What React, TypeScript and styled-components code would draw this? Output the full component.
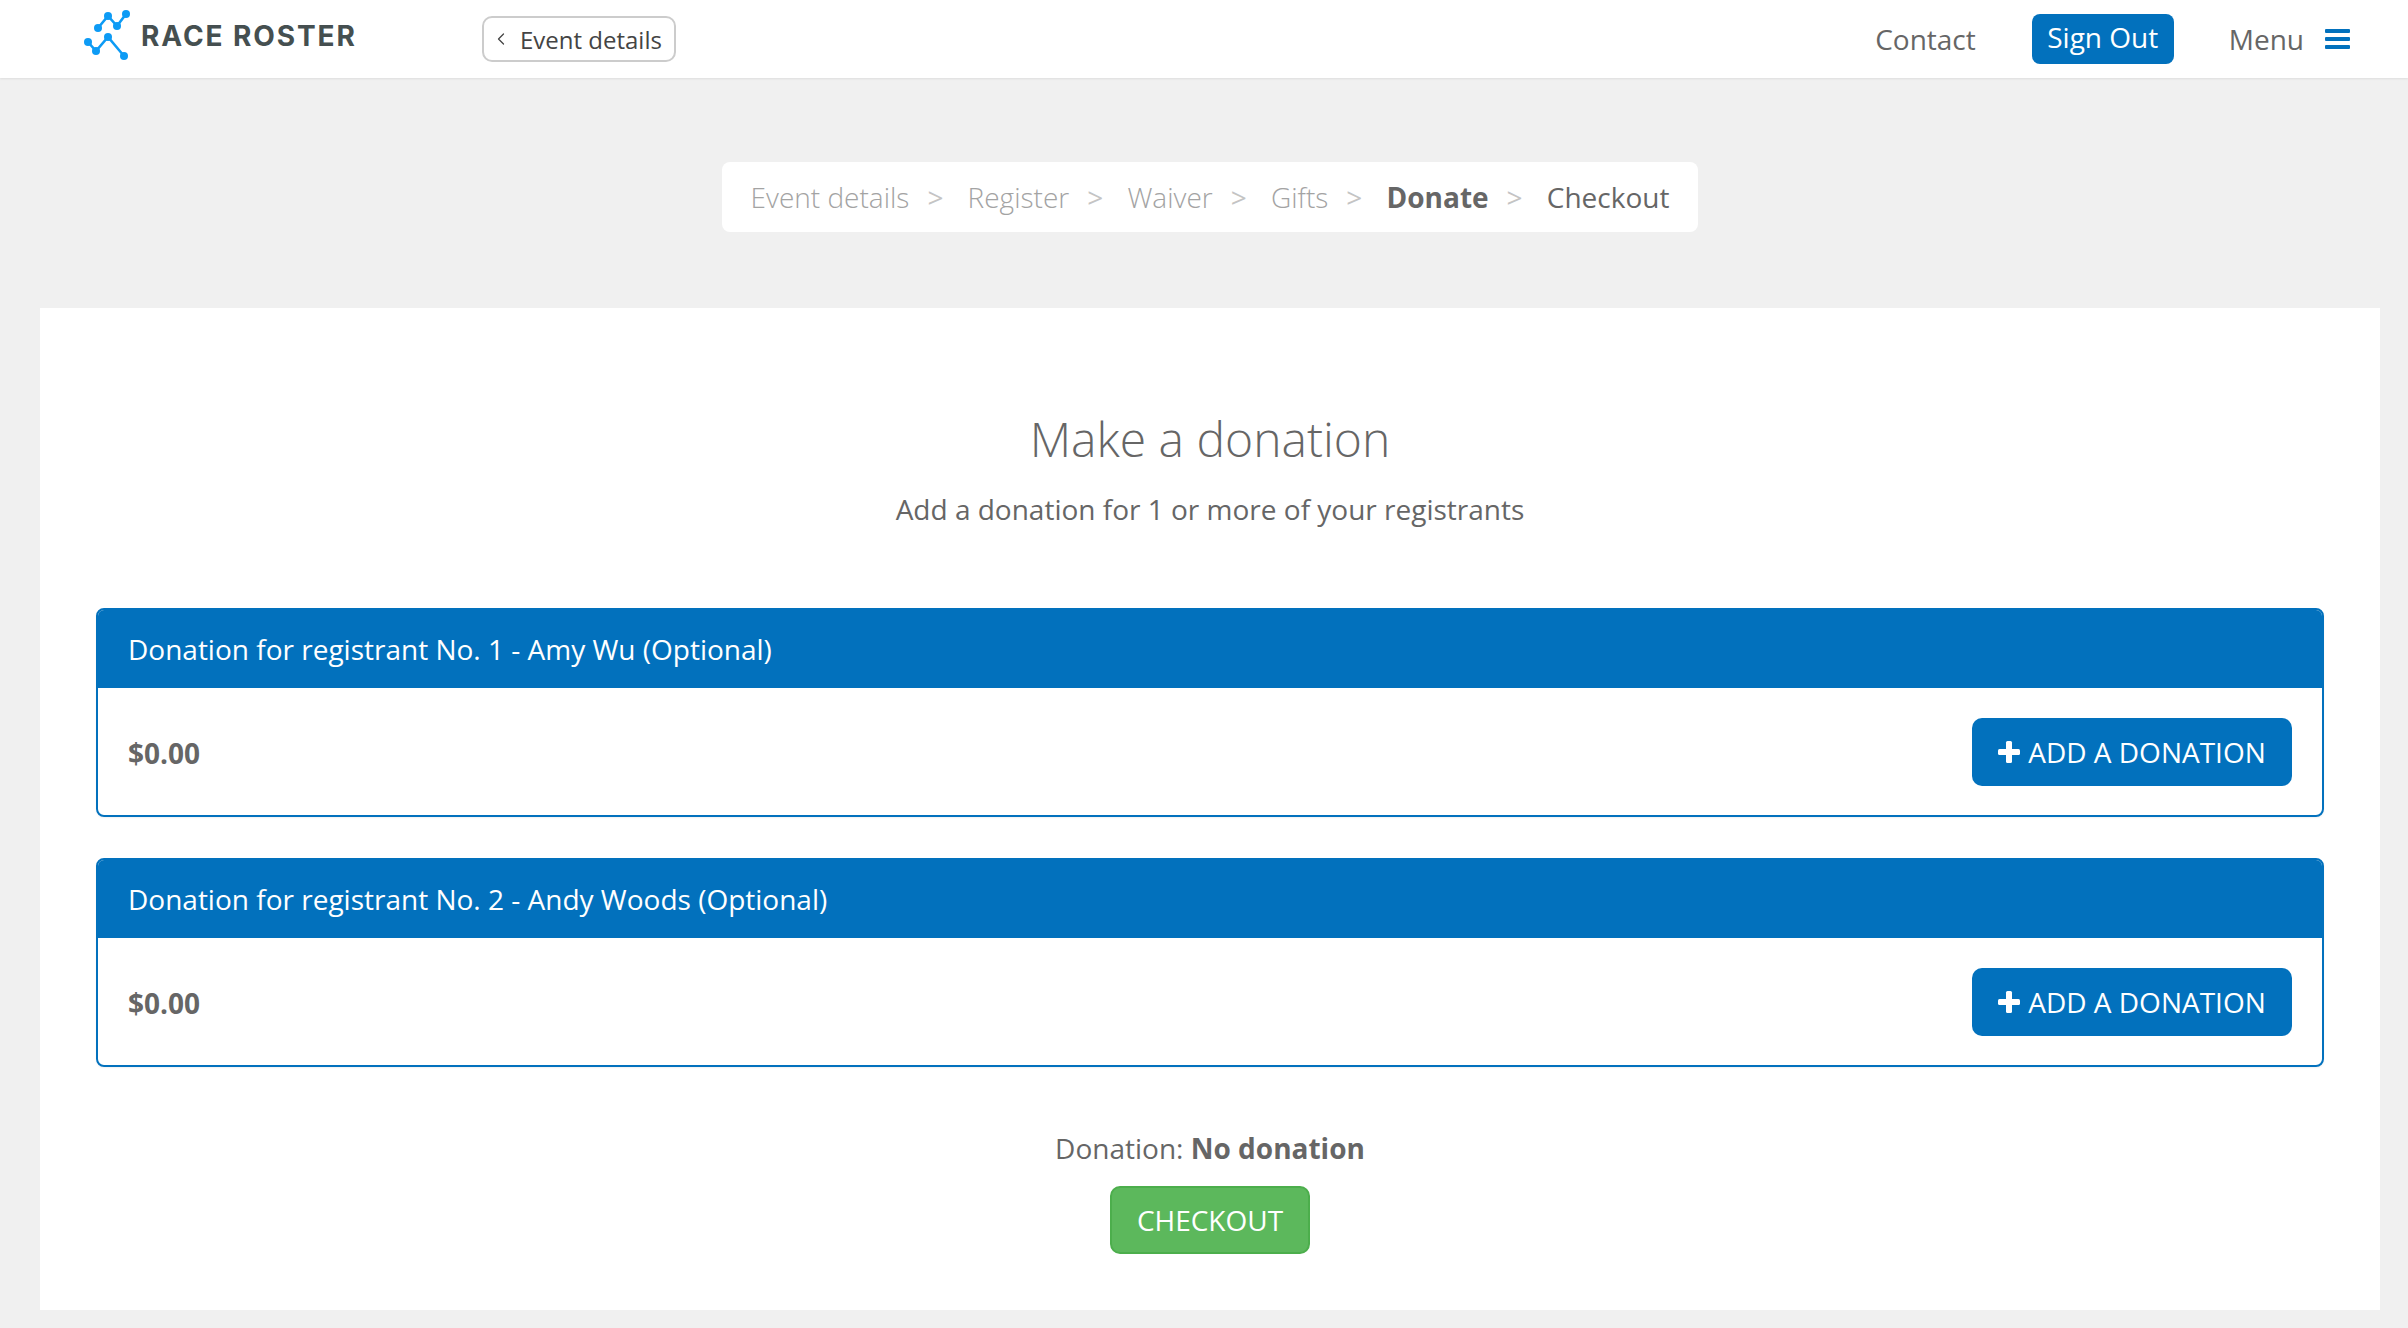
import { Fragment } from "react";
import styled, { createGlobalStyle } from "styled-components";
import { ChevronLeft } from "lucide-react";

const GlobalStyle = createGlobalStyle`
  html, body {
    margin: 0;
    padding: 0;
    background: #f0f0f0;
    font-family: "Open Sans", "Liberation Sans", sans-serif;
    color: #666;
  }
  * { box-sizing: border-box; }
`;

const Header = styled.header`
  height: 78px;
  background: #fff;
  box-shadow: 0 1px 2px rgba(0, 0, 0, 0.08);
  display: flex;
  align-items: center;
  padding: 0 58px 0 82px;
`;

const Logo = styled.div`
  display: flex;
  align-items: center;
  width: 400px;
  gap: 9px;
  margin-top: -8px;
`;

const LogoText = styled.span`
  font-family: "Inter", sans-serif;
  font-weight: 700;
  font-size: 28px;
  letter-spacing: 1.9px;
  color: #454f50;
  margin-top: 1px;
`;

const BackButton = styled.button`
  height: 46px;
  width: 194px;
  background: #fff;
  border: 2px solid #ccc;
  border-radius: 10px;
  display: flex;
  align-items: center;
  gap: 9px;
  padding: 0 0 0 7px;
  font: 400 24px "Open Sans", sans-serif;
  color: #444;
`;

const Nav = styled.nav`
  margin-left: auto;
  display: flex;
  align-items: center;
  font-size: 28px;
`;

const NavLink = styled.a`
  color: #666;
`;

const SignOut = styled.button`
  height: 50px;
  width: 142px;
  margin: 0 55px 0 56px;
  background: #0271bd;
  border: none;
  border-radius: 8px;
  color: #fff;
  font: 400 28px "Open Sans", sans-serif;
  padding: 0 0 5px;
`;

const MenuBars = styled.span`
  width: 25px;
  margin-left: 21px;
  display: flex;
  flex-direction: column;
  gap: 4px;

  i {
    display: block;
    height: 4px;
    background: #0271bd;
    border-radius: 1px;
  }
`;

const Content = styled.div`
  padding: 84px 28px 0 40px;
`;

const Crumbs = styled.ol`
  width: max-content;
  margin: 0 auto;
  height: 70px;
  list-style: none;
  padding: 0 29px;
  background: #fff;
  border-radius: 8px;
  display: flex;
  align-items: center;
  font-size: 28px;
`;

const crumbWeight = { done: 300, active: 700, todo: 400 };

const Crumb = styled.li<{ $state: "done" | "active" | "todo" }>`
  font-weight: ${(p) => crumbWeight[p.$state]};
  color: ${(p) => (p.$state === "done" ? "#a3a3a3" : "#666")};
`;

const Sep = styled.li`
  color: #c4c4c4;
  font-weight: 400;
  margin: 0 24.2px 0 18px;
`;

const Card = styled.main`
  margin-top: 76px;
  height: 1002px;
  background: #fff;
  padding: 99px 56px 0;
  text-align: center;
`;

const Title = styled.h1`
  margin: 0;
  font-size: 48px;
  line-height: 64px;
  font-weight: 300;
  color: #666;
`;

const Subtitle = styled.p`
  margin: 18px 0 0;
  font-size: 28px;
  line-height: 40px;
  font-weight: 400;
  color: #666;
`;

const Panel = styled.section`
  margin-top: 41px;
  border: 2px solid #0271bd;
  border-radius: 8px;
  height: 209px;
  text-align: left;
  overflow: hidden;
  box-shadow: 0 1px 2px rgba(0, 0, 0, 0.06);

  &:first-of-type {
    margin-top: 79px;
  }
`;

const PanelHeader = styled.h2`
  margin: 0;
  height: 78px;
  background: #0271bd;
  color: #fff;
  font-size: 28px;
  font-weight: 400;
  padding: 0 30px;
  display: flex;
  align-items: center;
`;

const PanelBody = styled.div`
  height: 127px;
  padding: 0 30px;
  display: flex;
  align-items: center;
  justify-content: space-between;
`;

const Amount = styled.strong`
  font-size: 28px;
  font-weight: 700;
  color: #666;
  margin-top: 3px;
`;

const AddButton = styled.button`
  width: 320px;
  height: 68px;
  background: #0271bd;
  border: none;
  border-radius: 10px;
  color: #fff;
  display: flex;
  align-items: center;
  justify-content: center;
  gap: 8px;
  font: 400 28px "Open Sans", sans-serif;
`;

const Summary = styled.p`
  margin: 61px 0 0;
  font-size: 28px;
  line-height: 40px;
`;

const CheckoutButton = styled.button`
  display: block;
  margin: 18px auto 0;
  width: 200px;
  height: 68px;
  background: #5cb85c;
  border: 2px solid #4cae4c;
  border-radius: 10px;
  color: #fff;
  font: 400 28px "Open Sans", sans-serif;
`;

const LogoMark = () => (
  <svg width="50" height="50" viewBox="84 10 44 50" fill="none" stroke="#0d9bf5" strokeWidth="2.6">
    <polyline points="97,28 107,16 116,26 125,14" />
    <polyline points="87,42 95,51 107,37 123,56" />
    {[
      [97, 28],
      [107, 16],
      [116, 26],
      [125, 14],
      [87, 42],
      [95, 51],
      [107, 37],
      [123, 56],
    ].map(([cx, cy]) => (
      <circle key={`${cx}-${cy}`} cx={cx} cy={cy} r="4" fill="#0d9bf5" stroke="none" />
    ))}
  </svg>
);

const PlusIcon = () => (
  <svg width="22" height="22" viewBox="0 0 22 22" fill="#fff">
    <rect x="0" y="8" width="22" height="6" rx="1.5" />
    <rect x="8" y="0" width="6" height="22" rx="1.5" />
  </svg>
);

const steps = ["Event details", "Register", "Waiver", "Gifts"];
const registrants = ["Amy Wu", "Andy Woods"];

const App = () => {
  return (
    <>
      <GlobalStyle />
      <Header>
        <Logo>
          <LogoMark />
          <LogoText>RACE ROSTER</LogoText>
        </Logo>
        <BackButton>
          <ChevronLeft size={20} strokeWidth={1.5} />
          Event details
        </BackButton>
        <Nav>
          <NavLink>Contact</NavLink>
          <SignOut>Sign Out</SignOut>
          <NavLink>Menu</NavLink>
          <MenuBars>
            <i />
            <i />
            <i />
          </MenuBars>
        </Nav>
      </Header>
      <Content>
        <Crumbs>
          {steps.map((s) => (
            <Fragment key={s}>
              <Crumb $state="done">{s}</Crumb>
              <Sep>&gt;</Sep>
            </Fragment>
          ))}
          <Crumb $state="active">Donate</Crumb>
          <Sep>&gt;</Sep>
          <Crumb $state="todo">Checkout</Crumb>
        </Crumbs>
        <Card>
          <Title>Make a donation</Title>
          <Subtitle>Add a donation for 1 or more of your registrants</Subtitle>
          {registrants.map((name, i) => (
            <Panel key={name}>
              <PanelHeader>
                Donation for registrant No. {i + 1} - {name} (Optional)
              </PanelHeader>
              <PanelBody>
                <Amount>$0.00</Amount>
                <AddButton>
                  <PlusIcon />
                  ADD A DONATION
                </AddButton>
              </PanelBody>
            </Panel>
          ))}
          <Summary>
            Donation: <strong>No donation</strong>
          </Summary>
          <CheckoutButton>CHECKOUT</CheckoutButton>
        </Card>
      </Content>
    </>
  );
};

export default App;
